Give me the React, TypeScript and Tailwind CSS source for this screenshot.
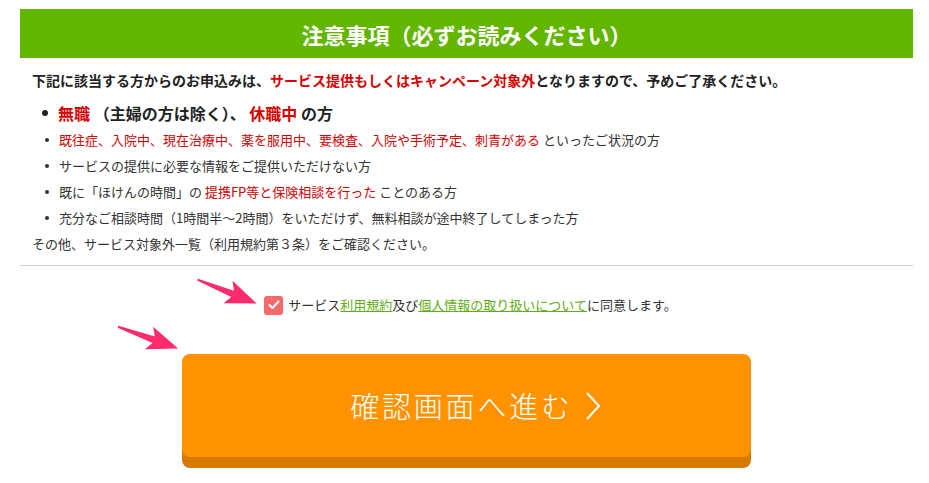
import React from "react";

function Arrow({ className }: { className: string }) {
  return (
    <svg className={className} width="70" height="30" viewBox="0 0 70 30">
      <g transform="translate(2,15)">
        <polygon points="0,-1 38,-3.5 33,-12 64,0 33,12 38,3.5 0,1" fill="#fd2a6c" />
      </g>
    </svg>
  );
}

export default function App() {
  const red = "text-[#d80000]";
  return (
    <div className="relative w-[929px] h-[483px] bg-white text-[#333] font-['Noto_Sans_CJK_JP','Noto_Sans',sans-serif] overflow-hidden">
      <div className="pt-[9px] pl-[20px] pr-[16px] w-[929px]">
        <div className="h-[49px] bg-[#63b600] flex items-center justify-center text-white text-[22px] font-bold leading-none">
          注意事項（必ずお読みください）
        </div>
        <div className="pl-[12px] pt-[12px]">
          <p className="text-[14px] font-bold leading-[20px] text-[#222]">
            下記に該当する方からのお申込みは、<span className={red}>サービス提供もしくはキャンペーン対象外</span>となりますので、予めご了承ください。
          </p>
          <div className="mt-[12px] flex items-center h-[22px] pl-[10px]">
            <span className="w-[6px] h-[6px] rounded-full bg-[#222] mr-[10px]" />
            <span className="text-[16px] font-bold text-[#222] leading-[22px] whitespace-pre">
              <span className={red}>無職</span> （主婦の方は除く）、 <span className={red}>休職中</span> の方
            </span>
          </div>
          <ul className="mt-[3px] text-[13px] leading-[26px]">
            <li className="flex items-center h-[26px] pl-[13px]">
              <span className="w-[4px] h-[4px] rounded-full bg-[#333] mr-[10px]" />
              <span>
                <span className={red}>既往症、入院中、現在治療中、薬を服用中、要検査、入院や手術予定、刺青がある</span> といったご状況の方
              </span>
            </li>
            <li className="flex items-center h-[26px] pl-[13px]">
              <span className="w-[4px] h-[4px] rounded-full bg-[#333] mr-[10px]" />
              <span>サービスの提供に必要な情報をご提供いただけない方</span>
            </li>
            <li className="flex items-center h-[26px] pl-[13px]">
              <span className="w-[4px] h-[4px] rounded-full bg-[#333] mr-[10px]" />
              <span>
                既に「ほけんの時間」の <span className={red}>提携FP等と保険相談を行った</span> ことのある方
              </span>
            </li>
            <li className="flex items-center h-[26px] pl-[13px]">
              <span className="w-[4px] h-[4px] rounded-full bg-[#333] mr-[10px]" />
              <span>充分なご相談時間（1時間半～2時間）をいただけず、無料相談が途中終了してしまった方</span>
            </li>
          </ul>
          <p className="text-[13px] leading-[26px]">その他、サービス対象外一覧（利用規約第３条）をご確認ください。</p>
        </div>
        <div className="mt-[8px] border-t border-[#d0d0d0]" />
        <div className="mt-[29px] h-[20px] flex items-center justify-center pl-[8px]">
          <span className="w-[19px] h-[19px] rounded-[3px] bg-[#f46a6a] flex items-center justify-center mr-[5px]">
            <svg width="12" height="10" viewBox="0 0 12 10">
              <polyline points="1.5,5 4.5,8 10.5,1.5" fill="none" stroke="white" strokeWidth="2" strokeLinecap="round" strokeLinejoin="round" />
            </svg>
          </span>
          <span className="text-[13px] leading-[20px] text-[#333]">
            サービス<span className="text-[#5fae14] underline">利用規約</span>及び<span className="text-[#5fae14] underline">個人情報の取り扱いについて</span>に同意します。
          </span>
        </div>
        <div className="mt-[39px] flex justify-center">
          <div className="w-[569px] h-[103px] rounded-[8px] bg-[#ff9200] shadow-[0_11px_0_#d67900] flex items-center justify-center pl-[18px] text-white">
            <span className="text-[29px] font-light tracking-[2.8px] leading-none">確認画面へ進む</span>
            <svg className="ml-[12px]" width="16" height="28" viewBox="0 0 16 28">
              <polyline points="2,1 14,14 2,27" fill="none" stroke="white" strokeWidth="2" />
            </svg>
          </div>
        </div>
      </div>
      <Arrow className="absolute left-[193px] top-[277px] rotate-[22deg]" />
      <Arrow className="absolute left-[114px] top-[323px] rotate-[20deg]" />
    </div>
  );
}
